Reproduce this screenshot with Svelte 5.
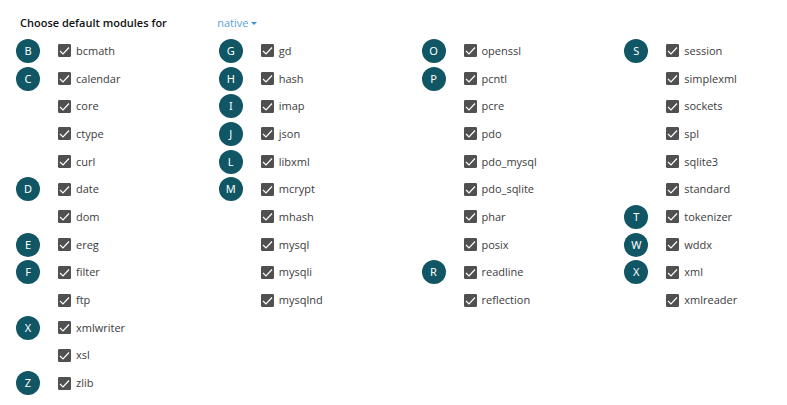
<script>
  const columns = $state(
    [
      'B:bcmath C:calendar core ctype curl D:date dom E:ereg F:filter ftp X:xmlwriter xsl Z:zlib',
      'G:gd H:hash I:imap J:json L:libxml M:mcrypt mhash mysql mysqli mysqlnd',
      'O:openssl P:pcntl pcre pdo pdo_mysql pdo_sqlite phar posix R:readline reflection',
      'S:session simplexml sockets spl sqlite3 standard T:tokenizer W:wddx X:xml xmlreader'
    ].map((list) =>
      list.split(' ').map((entry) => {
        const parts = entry.split(':');
        return { letter: parts.length > 1 ? parts[0] : '', name: parts.at(-1), checked: true };
      })
    )
  );
  let version = $state('native');
</script>

<main>
  <header>
    <label class="title" for="version">Choose default modules for</label>
    <div class="picker">
      <select id="version" bind:value={version}>
        <option value="native">native</option>
      </select>
      <svg class="caret" viewBox="0 0 6 3" aria-hidden="true"><path d="M0 0h6L3 3z" /></svg>
    </div>
  </header>

  <div class="columns">
    {#each columns as modules}
      <ul>
        {#each modules as module}
          <li>
            <span class="slot">
              {#if module.letter}<span class="letter">{module.letter}</span>{/if}
            </span>
            <label class="module">
              <span class="box">
                <input type="checkbox" bind:checked={module.checked} />
                <svg class="tick" viewBox="0 0 13 13" aria-hidden="true">
                  <path d="M2 7l3 3 6-6.5" />
                </svg>
              </span>
              {module.name}
            </label>
          </li>
        {/each}
      </ul>
    {/each}
  </div>
</main>

<style>
  :global(body) {
    margin: 0;
    background: #fff;
  }

  main {
    box-sizing: border-box;
    min-height: 100vh;
    padding: 13px 16px 8px;
    display: flex;
    flex-direction: column;
    gap: 4px;
    font-family: 'Open Sans', 'Noto Sans', sans-serif;
    font-size: 11px;
    line-height: 20px;
    color: #3c3c3c;
  }

  header,
  .columns {
    display: grid;
    grid-template-columns: repeat(4, minmax(0, 1fr));
    column-gap: 56px;
  }

  header {
    column-gap: 50px;
  }

  .title {
    padding-left: 4px;
    font-weight: 600;
    color: #111;
    white-space: nowrap;
  }

  .picker {
    display: flex;
    align-items: center;
    gap: 3px;
  }

  select {
    appearance: none;
    field-sizing: content;
    margin: 0;
    padding: 0;
    border: 0;
    background: none;
    font: inherit;
    color: #5a9fd8;
    cursor: pointer;
  }

  .caret {
    width: 6px;
    height: 3px;
    fill: #3d8fd0;
  }

  .columns {
    flex: 1;
  }

  ul {
    margin: 0;
    padding: 0;
    list-style: none;
    display: grid;
    grid-template-rows: repeat(13, minmax(24px, 1fr));
  }

  li {
    display: flex;
    align-items: center;
    gap: 18px;
  }

  .slot {
    flex: none;
    width: 24px;
  }

  .letter {
    display: block;
    height: 24px;
    border-radius: 50%;
    background: #105664;
    color: #fff;
    font-family: 'Noto Sans', 'Open Sans', sans-serif;
    font-size: 11px;
    line-height: 24px;
    text-align: center;
  }

  .module {
    display: flex;
    align-items: center;
    gap: 5px;
    cursor: pointer;
  }

  .box {
    display: grid;
    width: 13px;
    height: 13px;
  }

  .box > * {
    grid-area: 1 / 1;
  }

  input {
    appearance: none;
    box-sizing: border-box;
    width: 13px;
    height: 13px;
    margin: 0;
    border: 1px solid #505050;
    border-radius: 1px;
    cursor: pointer;
  }

  input:checked {
    background: #505050;
  }

  .tick {
    width: 13px;
    height: 13px;
    fill: none;
    stroke: #fff;
    stroke-width: 1.2;
    pointer-events: none;
  }
</style>
